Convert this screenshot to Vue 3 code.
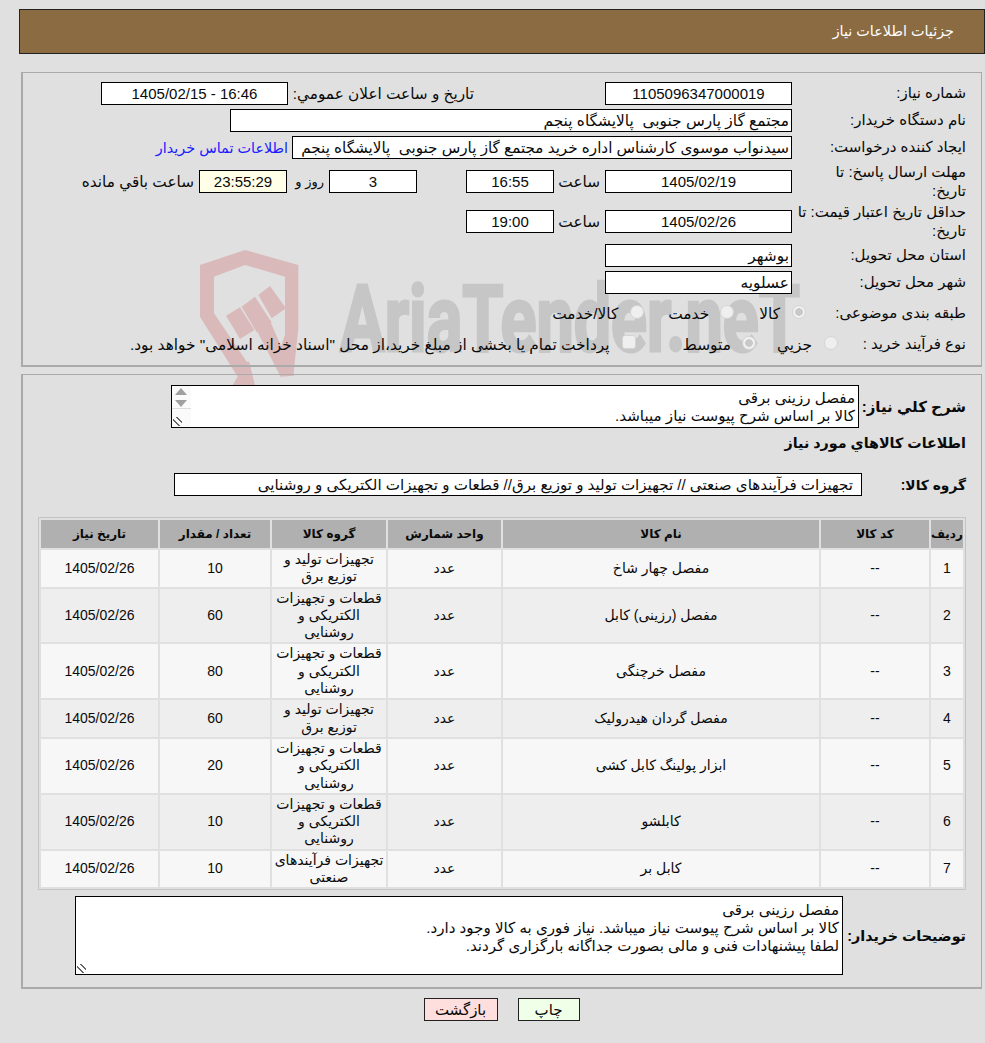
<template>
  <div class="page">
    <!-- واترمارک پشت صفحه -->
    <svg class="watermark" width="620" height="145" viewBox="0 0 620 145">
      <g transform="scale(0.3333)" fill="#d9b9b9">
        <polygon points="30,60 165,15 325,60 325,250 310,392 270,312 285,270 285,95 165,60 72,95 72,205 170,350 178,350 198,435 125,425 143,395 30,215" />
        <polygon points="198,252 240,228 312,392 272,395" />
        <polygon points="108,212 150,187 193,255 150,282" />
        <polygon points="155,185 195,155 245,232 200,262" />
        <polygon points="205,150 240,123 288,190 245,220" />
      </g>
      <text class="wm-text" x="150" y="106" textLength="460" lengthAdjust="spacingAndGlyphs">AriaTender.neT</text>
    </svg>

    <div class="title-bar">جزئیات اطلاعات نیاز</div>

    <!-- مشخصات نیاز -->
    <div class="panel info-panel">
      <div class="row">
        <div class="lbl">شماره نیاز:</div>
        <div class="field w187">1105096347000019</div>
        <div class="lbl2 announce">تاریخ و ساعت اعلان عمومي:</div>
        <div class="field w187 ltr">1405/02/15 - 16:46</div>
      </div>
      <div class="row">
        <div class="lbl">نام دستگاه خریدار:</div>
        <div class="field text w562">مجتمع گاز پارس جنوبی&nbsp; پالایشگاه پنجم</div>
      </div>
      <div class="row">
        <div class="lbl">ایجاد کننده درخواست:</div>
        <div class="field text w500">سیدنواب موسوی کارشناس اداره خرید مجتمع گاز پارس جنوبی&nbsp; پالایشگاه پنجم</div>
        <a class="contact">اطلاعات تماس خریدار</a>
      </div>
      <div class="row tall">
        <div class="lbl">مهلت ارسال پاسخ: تا<br />تاریخ:</div>
        <div class="field w187">1405/02/19</div>
        <div class="lbl2 hour">ساعت</div>
        <div class="field w88">16:55</div>
        <div class="field w88 days">3</div>
        <div class="lbl2 day-word">روز و</div>
        <div class="field w88 remain">23:55:29</div>
        <div class="lbl2 left-word">ساعت باقي مانده</div>
      </div>
      <div class="row tall">
        <div class="lbl">حداقل تاریخ اعتبار قیمت: تا<br />تاریخ:</div>
        <div class="field w187">1405/02/26</div>
        <div class="lbl2 hour">ساعت</div>
        <div class="field w88">19:00</div>
      </div>
      <div class="row">
        <div class="lbl">استان محل تحویل:</div>
        <div class="field text w187">بوشهر</div>
      </div>
      <div class="row">
        <div class="lbl">شهر محل تحویل:</div>
        <div class="field text w187">عسلویه</div>
      </div>
      <div class="row choices subject">
        <div class="lbl">طبقه بندی موضوعی:</div>
        <span class="radio checked r1"></span><span class="opt o1">کالا</span>
        <span class="radio r2"></span><span class="opt o2">خدمت</span>
        <span class="radio r3"></span><span class="opt o3">کالا/خدمت</span>
      </div>
      <div class="row choices process">
        <div class="lbl">نوع فرآیند خرید :</div>
        <span class="radio r4"></span><span class="opt o4">جزيي</span>
        <span class="radio checked r5"></span><span class="opt o5">متوسط</span>
        <span class="check"></span>
        <span class="opt o6">پرداخت تمام یا بخشی از مبلغ خرید،از محل "اسناد خزانه اسلامی" خواهد بود.</span>
      </div>
    </div>

    <!-- شرح و کالاها -->
    <div class="panel goods-panel">
      <div class="desc-row">
        <div class="bold-lbl desc-lbl">شرح کلي نیاز:</div>
        <div class="area short">
          <div>مفصل رزینی برقی</div>
          <div>کالا بر اساس شرح پیوست نیاز میباشد.</div>
          <div class="scroll">
            <span class="arrow up"></span>
            <span class="arrow down"></span>
            <span class="grip"></span>
          </div>
        </div>
      </div>
      <div class="bold-lbl goods-title">اطلاعات کالاهاي مورد نیاز</div>
      <div class="group-row">
        <div class="bold-lbl group-lbl">گروه کالا:</div>
        <div class="field text group-field">تجهیزات فرآیندهای صنعتی // تجهیزات تولید و توزیع برق// قطعات و تجهیزات الکتریکی و روشنایی</div>
      </div>

      <table class="items">
        <thead>
          <tr>
            <th class="c1">ردیف</th>
            <th class="c2">کد کالا</th>
            <th class="c3">نام کالا</th>
            <th class="c4">واحد شمارش</th>
            <th class="c5">گروه کالا</th>
            <th class="c6">تعداد / مقدار</th>
            <th class="c7">تاریخ نیاز</th>
          </tr>
        </thead>
        <tbody>
          <tr v-for="(item, i) in items" :key="i">
            <td>{{ i + 1 }}</td>
            <td>--</td>
            <td>{{ item.name }}</td>
            <td>عدد</td>
            <td class="pre">{{ item.group }}</td>
            <td>{{ item.qty }}</td>
            <td>1405/02/26</td>
          </tr>
        </tbody>
      </table>

      <div class="note-row">
        <div class="bold-lbl note-lbl">توضیحات خریدار:</div>
        <div class="area tall-area">
          <div>مفصل رزینی برقی</div>
          <div>کالا بر اساس شرح پیوست نیاز میباشد. نیاز فوری به کالا وجود دارد.</div>
          <div>لطفا پیشنهادات فنی و مالی بصورت جداگانه بارگزاری گردند.</div>
          <span class="grip corner"></span>
        </div>
      </div>
    </div>

    <div class="buttons">
      <button class="btn print">چاپ</button>
      <button class="btn back">بازگشت</button>
    </div>
  </div>
</template>

<script setup>
const G1 = 'تجهیزات تولید و\nتوزیع برق'
const G2 = 'قطعات و تجهیزات\nالکتریکی و\nروشنایی'
const G3 = 'تجهیزات فرآیندهای\nصنعتی'

const items = [
  { name: 'مفصل چهار شاخ', group: G1, qty: 10 },
  { name: 'مفصل (رزینی) کابل', group: G2, qty: 60 },
  { name: 'مفصل خرچنگی', group: G2, qty: 80 },
  { name: 'مفصل گردان هیدرولیک', group: G1, qty: 60 },
  { name: 'ابزار پولینگ کابل کشی', group: G2, qty: 20 },
  { name: 'کابلشو', group: G2, qty: 10 },
  { name: 'کابل بر', group: G3, qty: 10 }
]
</script>

<style>
body {
  background: #e0e0e0;
}
</style>

<style scoped>
.page {
  position: relative;
  width: 985px;
  height: 1043px;
  box-sizing: border-box;
  padding-top: 9px;
  overflow: hidden;
  font-family: "Liberation Sans", "DejaVu Sans", sans-serif;
  font-size: 15px;
  color: #0a0a0a;
  direction: rtl;
  background: #e0e0e0;
}
.watermark {
  position: absolute;
  left: 190px;
  top: 245px;
  direction: ltr;
}
.wm-text {
  font-family: Roboto, sans-serif;
  font-weight: 700;
  font-size: 92px;
  fill: #c6c6c6;
  stroke: #c6c6c6;
  stroke-width: 3px;
}

.title-bar {
  position: relative;
  width: 966px;
  height: 45px;
  box-sizing: border-box;
  margin-left: 19px;
  padding-right: 30px;
  border: 1px solid #222;
  background: #8b6b42;
  color: #fff;
  font-size: 14.4px;
  line-height: 43px;
}

.panel {
  position: relative;
  margin-left: 21px;
  margin-right: 3px;
  border: 1px solid #aaa;
  border-bottom-width: 2px;
  border-left-width: 2px;
}
.info-panel {
  height: 295px;
  box-sizing: border-box;
  margin-top: 18px;
  padding: 9px 15px 0 0;
}
.goods-panel {
  height: 615px;
  box-sizing: border-box;
  margin-top: 7px;
  padding: 10px 15px 0 0;
}

.row {
  display: flex;
  align-items: center;
  height: 23px;
  margin-bottom: 4px;
}
.row.tall {
  height: 37px;
  margin-bottom: 3px;
}
.row.tall + .row.tall {
  margin-bottom: 4px;
}
.lbl {
  flex: none;
  width: 169px;
  margin-left: 5px;
  line-height: 18.5px;
}
.lbl2 {
  flex: none;
  box-sizing: border-box;
  font-size: 15.3px;
  white-space: nowrap;
}
.field {
  flex: none;
  box-sizing: border-box;
  height: 23px;
  border: 1px solid #000;
  background: #fff;
  text-align: center;
  line-height: 21px;
  white-space: nowrap;
  overflow: hidden;
}
.field.text {
  font-size: 15.4px;
  text-align: right;
  padding: 0 2px;
}
.field.text.w500 {
  font-size: 15.2px;
}
.ltr {
  direction: ltr;
}
.w187 { width: 187px; }
.w88 { width: 88px; }
.w500 { width: 500px; }
.w562 { width: 562px; }
.announce {
  width: 312px;
  padding-right: 131px;
  margin-left: 5px;
}
.contact {
  margin-right: 4px;
  color: #1a1aff;
  font-size: 14.4px;
  white-space: nowrap;
}
.hour {
  width: 51px;
  padding-right: 5px;
}
.days {
  margin-right: 49px;
}
.lbl2.day-word {
  width: 42px;
  padding-right: 5px;
  font-size: 13px;
}
.remain {
  background: #ffffe8;
}
.left-word {
  margin-right: 5px;
}

.subject {
  margin-top: 8px;
}
.process {
  margin-top: 8px;
}
.radio {
  flex: none;
  box-sizing: border-box;
  width: 14px;
  height: 14px;
  border-radius: 50%;
  background: #efefef;
  border: 1px solid #d4d4d4;
  margin-top: -4px;
}
.radio.checked {
  background: radial-gradient(circle, #c8c8c8 0 3.5px, #f0f0f0 4px);
}
.check {
  flex: none;
  box-sizing: border-box;
  width: 14px;
  height: 14px;
  margin: -6px 47px 0 12px;
  border-radius: 3px;
  background: #efefef;
  border: 1px solid #d4d4d4;
}
.opt {
  flex: none;
  font-size: 15.4px;
  white-space: nowrap;
}
.r1 { margin-right: -14px; }
.o1 { margin-right: 12px; }
.r2 { margin-right: 25px; }
.o2 { margin-right: 11px; }
.r3 { margin-right: 24px; }
.o3 { margin-right: 12px; }
.r4 { margin-right: -46px; }
.o4 { margin-right: 12px; }
.r5 { margin-right: 21px; }
.o5 { margin-right: 11px; }

.bold-lbl {
  font-weight: 700;
  font-size: 14.3px;
  white-space: nowrap;
}
.desc-row {
  display: flex;
  align-items: center;
}
.desc-lbl {
  width: 107px;
  font-size: 15px;
}
.area {
  position: relative;
  flex: none;
  box-sizing: border-box;
  border: 1px solid #000;
  background: #fff;
  padding: 3px 3px 0;
  font-size: 15.1px;
  line-height: 18px;
}
.area.short {
  width: 688px;
  height: 43px;
}
.scroll {
  position: absolute;
  left: 0;
  top: 0;
  width: 19px;
  height: 41px;
  background: #fafafa;
}
.arrow {
  position: absolute;
  left: 3px;
  width: 0;
  height: 0;
  border-left: 6px solid transparent;
  border-right: 6px solid transparent;
}
.arrow.up {
  top: 2px;
  border-bottom: 7px solid #a0a0a0;
}
.arrow.down {
  top: 14px;
  border-top: 7px solid #a0a0a0;
}
.grip {
  position: absolute;
  left: 1px;
  bottom: 1px;
  width: 9px;
  height: 9px;
  background: linear-gradient(45deg, transparent 30%, #666 30% 44%, transparent 44% 62%, #666 62% 76%, transparent 76%);
}
.scroll::after {
  content: "";
  position: absolute;
  left: 0;
  right: 0;
  top: 22px;
  border-top: 1px solid #ddd;
}
.goods-title {
  margin-top: 6px;
  line-height: 18px;
}
.group-row {
  display: flex;
  align-items: center;
  margin-top: 21px;
}
.group-lbl {
  width: 104px;
  font-size: 13.8px;
}
.field.text.group-field {
  width: 688px;
  padding-right: 8px;
  font-size: 15.1px;
}

.items {
  box-sizing: border-box;
  width: 928px;
  margin-top: 21px;
  table-layout: fixed;
  border-collapse: separate;
  border-spacing: 2px;
  border: 1px solid #c4c4c4;
  font-size: 14px;
  color: #0a0a0a;
}
.items th {
  height: 28px;
  padding: 0;
  background: #b0b0b0;
  font-size: 12px;
  font-weight: 700;
}
.items td {
  padding: 1px 0;
  line-height: 17.3px;
  text-align: center;
}
.items tbody tr:nth-child(odd) td {
  background: #f7f7f7;
}
.items tbody tr:nth-child(even) td {
  background: #eeeeee;
}
.pre {
  white-space: pre-line;
}
.c1 { width: 32px; }
.c2 { width: 108px; }
.c3 { width: 316px; }
.c4 { width: 113px; }
.c5 { width: 114px; }
.c6 { width: 110px; }
.c7 { width: 117px; }

.note-row {
  display: flex;
  align-items: center;
  margin-top: 6px;
}
.note-lbl {
  width: 123px;
}
.area.tall-area {
  width: 768px;
  height: 79px;
  padding-top: 4px;
}
.grip.corner {
  left: 1px;
  bottom: 1px;
}

.buttons {
  display: flex;
  justify-content: center;
  gap: 20px;
  margin-top: 9px;
  padding-left: 18px;
}
.btn {
  box-sizing: border-box;
  height: 23px;
  padding: 0;
  border: 1px solid #222;
  font: inherit;
  color: #0a0a0a;
}
.print {
  width: 62px;
  background: #efffe8;
}
.back {
  width: 74px;
  background: #ffdede;
}
</style>
